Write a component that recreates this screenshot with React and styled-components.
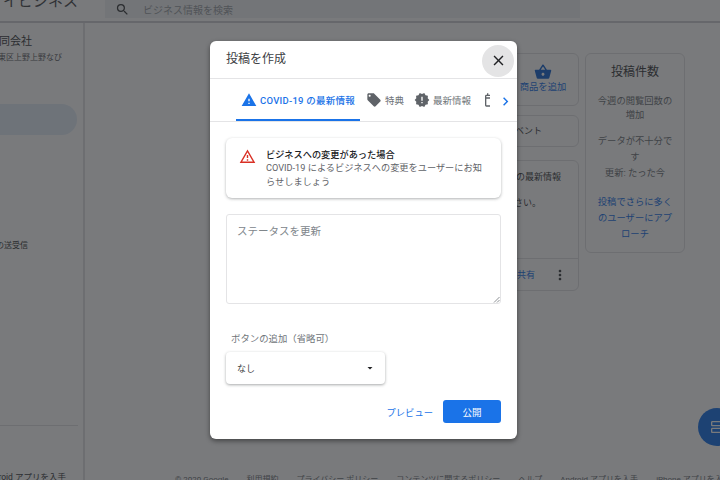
import React from 'react';
import styled, { createGlobalStyle } from 'styled-components';
import {
  MdWarning,
  MdLocalOffer,
  MdNewReleases,
  MdOutlineEvent,
  MdChevronRight,
  MdClose,
  MdSearch,
  MdShoppingBasket,
  MdMoreVert,
  MdOutlineWarningAmber,
  MdArrowDropDown,
  MdOutlineViewAgenda,
} from 'react-icons/md';

const GlobalStyle = createGlobalStyle`
  html, body { margin: 0; padding: 0; background: #fff; }
  * { box-sizing: border-box; }
  body { font-family: "Roboto", "Noto Sans CJK JP", sans-serif; color: #3c4043; }
`;

const Page = styled.div`
  position: relative;
  width: 720px;
  height: 480px;
  overflow: hidden;
  display: flex;
  flex-direction: column;
`;

/* page behind the dialog */
const Header = styled.header`
  height: 23px;
  flex: none;
  display: flex;
  border-bottom: 2px solid #d0d0d4;
`;
const Brand = styled.div`
  width: 105px;
  flex: none;
  display: flex;
  justify-content: flex-end;
  overflow: hidden;
  padding-right: 27px;
  font-size: 15px;
  line-height: 16px;
  white-space: nowrap;
  color: #4a4b4f;
  margin-top: -7px;
`;
const Search = styled.div`
  width: 475px;
  height: 18px;
  background: #f1f3f4;
  display: flex;
  align-items: center;
  padding-left: 10px;
  gap: 13px;
  font-size: 10px;
  color: #9aa0a6;
  svg { font-size: 15px; color: #3c4043; }
`;

const Body = styled.div`
  flex: 1;
  min-height: 0;
  display: flex;
`;
const Sidebar = styled.aside`
  width: 85px;
  flex: none;
  display: flex;
  flex-direction: column;
  border-right: 2px solid #e2e2e4;
  overflow: hidden;
`;
const SideText = styled.div`
  display: flex;
  justify-content: flex-end;
  white-space: nowrap;
  padding-right: ${p => p.$right}px;
  margin-top: ${p => p.$top}px;
  font-size: ${p => p.$size}px;
  line-height: 14px;
  color: ${p => p.$color || '#5f6368'};
`;
const ActivePill = styled.div`
  width: 77px;
  height: 31px;
  flex: none;
  margin-top: 39px;
  border-radius: 0 16px 16px 0;
  background: #e3edf8;
`;
const SideRule = styled.div`
  width: 78px;
  height: 1px;
  flex: none;
  margin-top: 172px;
  background: #e2e2e4;
`;

const Main = styled.main`
  flex: 1;
  min-width: 0;
  display: flex;
  flex-direction: column;
`;
const Columns = styled.div`
  flex: 1;
  min-height: 0;
  display: flex;
  justify-content: flex-end;
  gap: 6px;
  padding: 30px 35px 0 0;
`;
const Stack = styled.div`
  width: 340px;
  display: flex;
  flex-direction: column;
`;
const Card = styled.div`
  border: 1px solid #e2e2e4;
  border-radius: 6px;
  background: #fff;
  height: ${p => p.$h}px;
  margin-bottom: ${p => p.$gap}px;
  overflow: hidden;
`;
const AddProduct = styled.div`
  margin: 0 5px 0 auto;
  width: 60px;
  height: 100%;
  display: flex;
  flex-direction: column;
  align-items: center;
  justify-content: center;
  padding-bottom: 4px;
  font-size: 9.3px;
  line-height: 12px;
  color: #1a73e8;
  svg { font-size: 18px; color: #1967d2; }
`;
const RightLabel = styled.div`
  display: flex;
  justify-content: flex-end;
  white-space: nowrap;
  padding-right: ${p => p.$right}px;
  margin-top: ${p => p.$top}px;
  font-size: ${p => p.$size || 9}px;
  line-height: 12px;
  color: #3c4043;
`;
const ShareRow = styled.div`
  margin-top: 49px;
  height: 32px;
  border-top: 1px solid #e2e2e4;
  display: flex;
  justify-content: flex-end;
  align-items: center;
  gap: 17px;
  padding-right: 10px;
  font-size: 9px;
  color: #1a73e8;
  svg { font-size: 16px; color: #3c4043; }
`;

const StatsCard = styled.section`
  width: 100px;
  height: 200px;
  border: 1px solid #e2e2e4;
  border-radius: 6px;
  padding: 9px 10px 0;
  text-align: center;
  font-size: 9.3px;
  line-height: 16px;
  color: #70757a;
`;
const StatsTitle = styled.h3`
  margin: 0 0 13px;
  font-size: 12px;
  font-weight: 400;
  line-height: 18px;
  color: #3c4043;
`;
const StatsPara = styled.p`
  margin: 0 0 ${p => p.$gap}px;
  line-height: ${p => p.$lh || 16}px;
  color: ${p => p.$color || 'inherit'};
`;

const Footer = styled.footer`
  flex: none;
  height: 5px;
  display: flex;
  gap: 18px;
  padding-left: 90px;
  overflow: hidden;
  white-space: nowrap;
  font-size: 8px;
  line-height: 10px;
  color: #70757a;
`;

const Fab = styled.div`
  position: absolute;
  left: 698px;
  top: 408px;
  width: 38px;
  height: 38px;
  border-radius: 50%;
  background: #1a73e8;
  display: flex;
  align-items: center;
  padding-left: 11px;
  color: #fff;
  font-size: 16px;
`;

const Scrim = styled.div`
  position: absolute;
  inset: 0;
  background: rgba(32, 33, 36, 0.6);
`;

/* dialog */
const Dialog = styled.div`
  position: absolute;
  left: 210px;
  top: 41px;
  width: 307px;
  height: 398px;
  background: #fff;
  border-radius: 6px;
  box-shadow: 0 2px 5px rgba(0, 0, 0, 0.45);
  display: flex;
  flex-direction: column;
`;
const DialogHead = styled.div`
  height: 38px;
  flex: none;
  display: flex;
  align-items: center;
  justify-content: space-between;
  padding: 0 3px 4px 16px;
  border-bottom: 1px solid #e4e4e6;
`;
const DialogTitle = styled.h2`
  margin: 0;
  font-size: 12px;
  font-weight: 400;
  color: #3c4043;
`;
const CloseButton = styled.button`
  width: 32px;
  height: 32px;
  margin-top: 6px;
  border: 0;
  padding: 0;
  border-radius: 50%;
  background: #e4e4e5;
  color: #202124;
  display: flex;
  align-items: center;
  justify-content: center;
  font-size: 17px;
`;
const TabBar = styled.div`
  height: 43px;
  flex: none;
  display: flex;
  padding-left: 26px;
  border-bottom: 1px solid #e4e4e6;
`;
const Tabs = styled.div`
  width: 254px;
  flex: none;
  display: flex;
  overflow: hidden;
`;
const Tab = styled.div`
  flex: none;
  height: 42px;
  display: flex;
  align-items: center;
  gap: 3px;
  padding: 2px ${p => p.$padR}px 0 ${p => p.$padL}px;
  font-size: 9.5px;
  white-space: nowrap;
  letter-spacing: ${p => (p.$active ? '0.25px' : '0')};
  color: ${p => (p.$active ? '#1a73e8' : '#70757a')};
  font-weight: ${p => (p.$active ? 500 : 400)};
  border-bottom: 2px solid ${p => (p.$active ? '#1a73e8' : 'transparent')};
  svg { font-size: 16px; flex: none; color: ${p => (p.$active ? '#1a73e8' : '#5f6368')}; }
`;
const TabArrow = styled.div`
  flex: 1;
  height: 42px;
  display: flex;
  align-items: center;
  padding: 2px 0 0 7px;
  font-size: 17px;
  color: #1a73e8;
`;
const DialogBody = styled.div`
  flex: 1;
  display: flex;
  flex-direction: column;
  padding: 16px 16px 16px;
`;
const Alert = styled.div`
  height: 60px;
  flex: none;
  display: flex;
  gap: 10px;
  padding: 10px 10px 0 13px;
  border-radius: 6px;
  box-shadow: 0 1px 3px rgba(60, 64, 67, 0.4);
`;
const AlertIcon = styled.div`
  flex: none;
  font-size: 17px;
  line-height: 17px;
  color: #d93025;
`;
const AlertTitle = styled.div`
  font-size: 9.2px;
  font-weight: 500;
  line-height: 13px;
  color: #202124;
`;
const AlertText = styled.div`
  max-width: 219px;
  font-size: 9.2px;
  line-height: 14px;
  color: #5f6368;
`;
const StatusBox = styled.div`
  position: relative;
  height: 90px;
  flex: none;
  margin-top: 16px;
  padding: 9px 10px;
  border: 1px solid #e4e4e6;
  border-radius: 3px;
  font-size: 10.5px;
  line-height: 16px;
  color: #80868b;
`;
const ResizeGrip = styled.svg`
  position: absolute;
  right: 0;
  bottom: 0;
  width: 7px;
  height: 7px;
`;
const FieldLabel = styled.div`
  margin: 28px 0 0 5px;
  font-size: 9.4px;
  line-height: 14px;
  color: #70757a;
`;
const Select = styled.div`
  width: 159px;
  height: 32px;
  flex: none;
  margin-top: 6px;
  display: flex;
  align-items: center;
  justify-content: space-between;
  padding: 0 9px 0 11px;
  border-radius: 4px;
  box-shadow: 0 1px 3px rgba(60, 64, 67, 0.45);
  font-size: 9px;
  color: #3c4043;
  svg { font-size: 12px; color: #202124; }
`;
const Actions = styled.div`
  margin-top: auto;
  display: flex;
  justify-content: flex-end;
  align-items: center;
  gap: 10px;
`;
const PreviewButton = styled.button`
  border: 0;
  padding: 0;
  background: none;
  font: inherit;
  font-size: 9.3px;
  color: #1a73e8;
`;
const PublishButton = styled.button`
  width: 58px;
  height: 23px;
  border: 0;
  padding: 0;
  border-radius: 3px;
  background: #1a73e8;
  font: inherit;
  font-size: 9.5px;
  color: #fff;
`;

export default function App() {
  return (
    <Page>
      <GlobalStyle />
      <Header>
        <Brand>Google マイビジネス</Brand>
        <Search>
          <MdSearch />
          ビジネス情報を検索
        </Search>
      </Header>
      <Body>
        <Sidebar>
          <SideText $top={12} $right={51} $size={11} $color="#3c4043">合同会社</SideText>
          <SideText $top={2} $right={21} $size={8}>東京都台東区上野上野なび</SideText>
          <ActivePill />
          <SideText $top={104} $right={55} $size={8} $color="#3c4043">メッセージの送受信</SideText>
          <SideRule />
          <SideText $top={44} $right={17} $size={8.5} $color="#3c4043">Android アプリを入手</SideText>
        </Sidebar>
        <Main>
          <Columns>
            <Stack>
              <Card $h={53} $gap={9}>
                <AddProduct>
                  <MdShoppingBasket />
                  商品を追加
                </AddProduct>
              </Card>
              <Card $h={32} $gap={13}>
                <RightLabel $top={9} $right={36}>イベント</RightLabel>
              </Card>
              <Card $h={131} $gap={0}>
                <RightLabel $top={10} $right={17}>COVID-19 の最新情報</RightLabel>
                <RightLabel $top={14} $right={37}>ご確認ください。</RightLabel>
                <ShareRow>
                  共有
                  <MdMoreVert />
                </ShareRow>
              </Card>
            </Stack>
            <StatsCard>
              <StatsTitle>投稿件数</StatsTitle>
              <StatsPara $gap={11} $lh={14}>今週の閲覧回数の増加</StatsPara>
              <StatsPara $gap={0}>データが不十分です</StatsPara>
              <StatsPara $gap={13}>更新: たった今</StatsPara>
              <StatsPara $gap={0} $color="#1a73e8">投稿でさらに多くのユーザーにアプローチ</StatsPara>
            </StatsCard>
          </Columns>
          <Footer>
            <span>© 2020 Google</span>
            <span>利用規約</span>
            <span>プライバシー ポリシー</span>
            <span>コンテンツに関するポリシー</span>
            <span>ヘルプ</span>
            <span>Android アプリを入手</span>
            <span>iPhone アプリを入手</span>
          </Footer>
        </Main>
      </Body>
      <Fab>
        <MdOutlineViewAgenda />
      </Fab>
      <Scrim />
      <Dialog>
        <DialogHead>
          <DialogTitle>投稿を作成</DialogTitle>
          <CloseButton>
            <MdClose />
          </CloseButton>
        </DialogHead>
        <TabBar>
          <Tabs>
            <Tab $active $padL={5} $padR={5}>
              <MdWarning />
              COVID-19 の最新情報
            </Tab>
            <Tab $padL={6} $padR={10}>
              <MdLocalOffer />
              特典
            </Tab>
            <Tab $padL={0} $padR={10}>
              <MdNewReleases />
              最新情報
            </Tab>
            <Tab $padL={2} $padR={0}>
              <MdOutlineEvent />
              イベント
            </Tab>
          </Tabs>
          <TabArrow>
            <MdChevronRight />
          </TabArrow>
        </TabBar>
        <DialogBody>
          <Alert>
            <AlertIcon>
              <MdOutlineWarningAmber />
            </AlertIcon>
            <div>
              <AlertTitle>ビジネスへの変更があった場合</AlertTitle>
              <AlertText>COVID-19 によるビジネスへの変更をユーザーにお知らせしましょう</AlertText>
            </div>
          </Alert>
          <StatusBox>
            ステータスを更新
            <ResizeGrip viewBox="0 0 7 7">
              <path d="M1 6.5 6.5 1M4 6.5 6.5 4" stroke="#70757a" strokeWidth="0.8" fill="none" />
            </ResizeGrip>
          </StatusBox>
          <FieldLabel>ボタンの追加（省略可）</FieldLabel>
          <Select>
            なし
            <MdArrowDropDown />
          </Select>
          <Actions>
            <PreviewButton>プレビュー</PreviewButton>
            <PublishButton>公開</PublishButton>
          </Actions>
        </DialogBody>
      </Dialog>
    </Page>
  );
}
